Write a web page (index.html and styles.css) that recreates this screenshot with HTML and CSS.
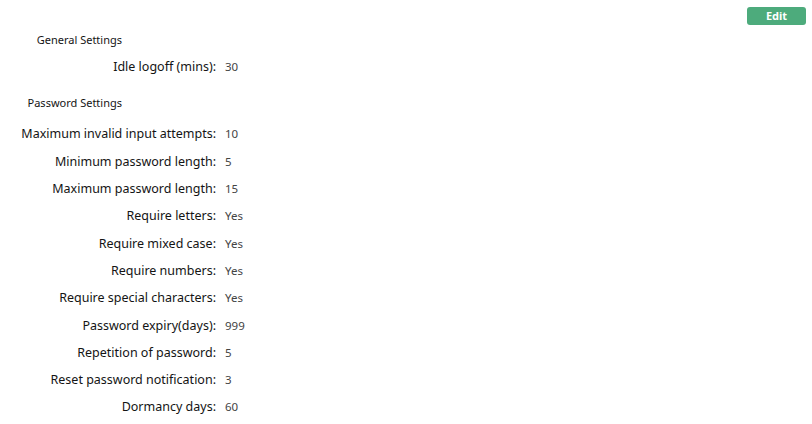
FILE: index.html
```html
<!DOCTYPE html>
<html>
<head>
<meta charset="utf-8">
<link rel="stylesheet" href="styles.css">
</head>
<body>
<div class="page">
  <div class="toolbar"><button class="edit-btn">Edit</button></div>
  <h3 class="section-title">General Settings</h3>
  <div class="settings">
    <div class="label">Idle logoff (mins):</div><div class="value">30</div>
  </div>
  <h3 class="section-title pw">Password Settings</h3>
  <div class="settings">
    <div class="label">Maximum invalid input attempts:</div><div class="value">10</div>
    <div class="label">Minimum password length:</div><div class="value">5</div>
    <div class="label">Maximum password length:</div><div class="value">15</div>
    <div class="label">Require letters:</div><div class="value">Yes</div>
    <div class="label">Require mixed case:</div><div class="value">Yes</div>
    <div class="label">Require numbers:</div><div class="value">Yes</div>
    <div class="label">Require special characters:</div><div class="value">Yes</div>
    <div class="label">Password expiry(days):</div><div class="value">999</div>
    <div class="label">Repetition of password:</div><div class="value">5</div>
    <div class="label">Reset password notification:</div><div class="value">3</div>
    <div class="label">Dormancy days:</div><div class="value">60</div>
  </div>
</div>
</body>
</html>
```
FILE: styles.css
```css
html, body {
  margin: 0;
  padding: 0;
  background: #ffffff;
}
body {
  font-family: "Noto Sans", "Open Sans", sans-serif;
  font-size: 12.5px;
  color: #141414;
}
.page {
  width: 812px;
}
.toolbar {
  display: flex;
  justify-content: flex-end;
  padding: 7px 6px 0 0;
  height: 18px;
}
.edit-btn {
  width: 59px;
  height: 18px;
  border: none;
  border-radius: 3px;
  background: #4dab7c;
  color: #fff;
  font-family: "Noto Sans", sans-serif;
  font-size: 11px;
  font-weight: bold;
  padding: 0;
  line-height: 18px;
}
.section-title {
  margin: 0;
  width: 122px;
  text-align: right;
  font-size: 11px;
  font-weight: normal;
  color: #141414;
  height: 20px;
  line-height: 20px;
  margin-top: 5px;
}
.section-title.pw {
  margin-top: 13px;
  margin-bottom: 4px;
}
.settings {
  display: grid;
  grid-template-columns: 216px auto;
  column-gap: 9px;
  grid-auto-rows: 27.3px;
  align-items: center;
  padding-top: 3px;
}
.label {
  text-align: right;
  color: #141414;
}
.value {
  color: #444;
  font-size: 11.5px;
}
```
